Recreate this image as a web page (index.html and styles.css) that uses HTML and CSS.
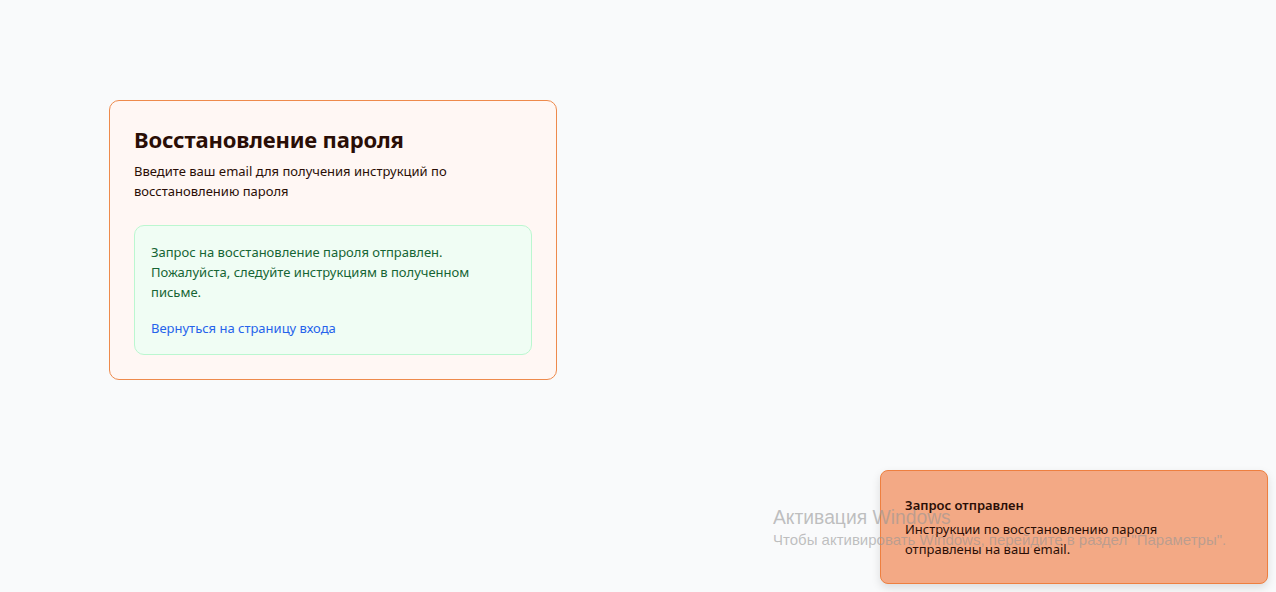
FILE: index.html
```html
<!DOCTYPE html>
<html lang="ru">
<head>
<meta charset="utf-8">
<title>Восстановление пароля</title>
<link rel="stylesheet" href="styles.css">
</head>
<body>
<main class="page">
  <section class="card">
    <h1 class="title">Восстановление пароля</h1>
    <p class="subtitle">Введите ваш email для получения инструкций по восстановлению пароля</p>
    <div class="success">
      <p class="success-text">Запрос на восстановление пароля отправлен. Пожалуйста, следуйте инструкциям в полученном письме.</p>
      <a class="back-link" href="#">Вернуться на страницу входа</a>
    </div>
  </section>
</main>
<div class="toast">
  <div class="toast-title">Запрос отправлен</div>
  <div class="toast-desc">Инструкции по восстановлению пароля отправлены на ваш email.</div>
</div>
<div class="watermark">
  <div class="wm-title">Активация Windows</div>
  <div class="wm-text">Чтобы активировать Windows, перейдите в раздел "Параметры".</div>
</div>
</body>
</html>
```
FILE: styles.css
```css
* { box-sizing: border-box; }
html, body { margin: 0; padding: 0; }
body {
  background: #f9fafb;
  font-family: "Noto Sans", "Open Sans", sans-serif;
  width: 1276px;
  height: 592px;
  overflow: hidden;
  position: relative;
}
.page {
  padding: 100px 0 0 109px;
}
.card {
  width: 448px;
  border: 1px solid #ee8a4c;
  border-radius: 10px;
  background: #fff7f4;
  padding: 24px;
}
.title {
  margin: 0;
  font-size: 22px;
  line-height: 28px;
  font-weight: 700;
  letter-spacing: -0.15px;
  color: #2a0e06;
}
.subtitle {
  margin: 8px 0 0;
  font-size: 13px;
  line-height: 20px;
  color: #2a0e06;
}
.success {
  margin-top: 24px;
  border: 1px solid #bbf7d0;
  border-radius: 10px;
  background: #f0fdf4;
  padding: 16px;
}
.success-text {
  margin: 0;
  font-size: 13px;
  line-height: 20px;
  color: #166534;
}
.back-link {
  display: block;
  margin-top: 16px;
  font-size: 13px;
  line-height: 20px;
  color: #2563eb;
  text-decoration: none;
}
.watermark {
  position: absolute;
  left: 773px;
  top: 505px;
  color: rgba(150, 150, 150, 0.6);
  font-family: "Liberation Sans", "DejaVu Sans", sans-serif;
  pointer-events: none;
  white-space: nowrap;
}
.wm-title { font-size: 19.3px; line-height: 25px; }
.wm-text { font-size: 15px; line-height: 20px; }
.toast {
  position: absolute;
  left: 880px;
  top: 470px;
  width: 388px;
  background: #f3a985;
  border: 1px solid #ee7f3f;
  border-radius: 8px;
  padding: 24px;
  box-shadow: 0 4px 10px rgba(0,0,0,0.12);
  color: #2a0e06;
}
.toast-title {
  font-size: 13px;
  line-height: 20px;
  font-weight: 600;
}
.toast-desc {
  margin-top: 4px;
  font-size: 13px;
  line-height: 20px;
  max-width: 280px;
}
```
